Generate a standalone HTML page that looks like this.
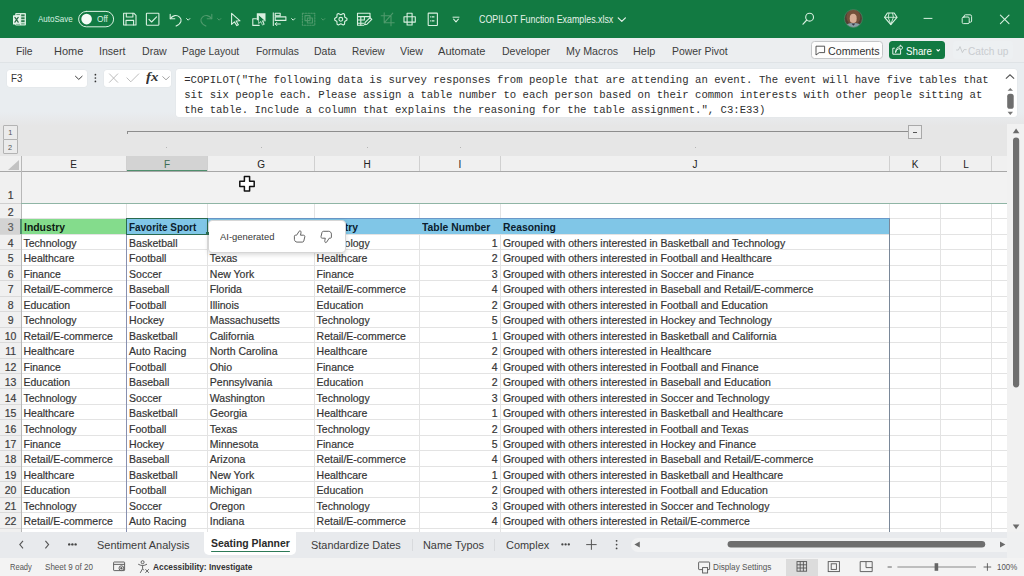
<!DOCTYPE html>
<html><head><meta charset="utf-8"><style>
html,body{margin:0;padding:0;}
body{width:1024px;height:576px;overflow:hidden;position:relative;background:#fff;font-family:"Liberation Sans",sans-serif;}
</style></head><body>
<div style="position:absolute;left:0.00px;top:0.00px;width:1024.00px;height:37.60px;background:#127a42"></div><div style="position:absolute;left:0.00px;top:37.60px;width:1024.00px;height:24.40px;background:#eceef0"></div><div style="position:absolute;left:0.00px;top:62.00px;width:1024.00px;height:62.00px;background:#e9edf0"></div><div style="position:absolute;left:0.00px;top:61.60px;width:1024.00px;height:0.80px;background:#dfe3e6"></div><div style="position:absolute;left:0.00px;top:124.00px;width:1024.00px;height:32.00px;background:#e6e6e6"></div><div style="position:absolute;left:0.00px;top:112.00px;width:1024.00px;height:14.00px;background:linear-gradient(#e9edf0,#e7e8e9 70%,#e6e6e6)"></div><div style="position:absolute;left:0.00px;top:156.00px;width:1007.20px;height:15.50px;background:#f0f0f0"></div><div style="position:absolute;left:21.20px;top:171.50px;width:986.00px;height:31.80px;background:#f2f2f2"></div><div style="position:absolute;left:0.00px;top:171.50px;width:21.20px;height:360.30px;background:#f0f0f0"></div><div style="position:absolute;left:21.20px;top:203.30px;width:986.00px;height:328.50px;background:#ffffff"></div><div style="position:absolute;left:1007.20px;top:124.00px;width:16.80px;height:407.80px;background:#f1f1f1"></div><div style="position:absolute;left:0.00px;top:531.80px;width:1024.00px;height:26.50px;background:#e8eaed"></div><div style="position:absolute;left:0.00px;top:558.30px;width:1024.00px;height:17.70px;background:#f3f3f3"></div><div style="position:absolute;left:126.20px;top:156.00px;width:81.50px;height:15.50px;background:#d3d3d3"></div><div style="position:absolute;left:126.20px;top:169.90px;width:81.50px;height:1.60px;background:#4f8f6d"></div><div style="position:absolute;left:0.00px;top:218.77px;width:21.20px;height:15.47px;background:#d3d3d3"></div><div style="position:absolute;left:21.20px;top:218.77px;width:105.00px;height:15.47px;background:#84dc8c"></div><div style="position:absolute;left:126.20px;top:218.77px;width:763.40px;height:15.47px;background:#80c6e7"></div><div style="position:absolute;left:125.70px;top:203.30px;width:1.00px;height:15.47px;background:#e3e3e3"></div><div style="position:absolute;left:125.70px;top:234.24px;width:1.00px;height:297.56px;background:#e3e3e3"></div><div style="position:absolute;left:125.70px;top:156.00px;width:1.00px;height:15.50px;background:#d0d0d0"></div><div style="position:absolute;left:207.20px;top:203.30px;width:1.00px;height:15.47px;background:#e3e3e3"></div><div style="position:absolute;left:207.20px;top:234.24px;width:1.00px;height:297.56px;background:#e3e3e3"></div><div style="position:absolute;left:207.20px;top:156.00px;width:1.00px;height:15.50px;background:#d0d0d0"></div><div style="position:absolute;left:313.90px;top:203.30px;width:1.00px;height:15.47px;background:#e3e3e3"></div><div style="position:absolute;left:313.90px;top:234.24px;width:1.00px;height:297.56px;background:#e3e3e3"></div><div style="position:absolute;left:313.90px;top:156.00px;width:1.00px;height:15.50px;background:#d0d0d0"></div><div style="position:absolute;left:419.10px;top:203.30px;width:1.00px;height:15.47px;background:#e3e3e3"></div><div style="position:absolute;left:419.10px;top:234.24px;width:1.00px;height:297.56px;background:#e3e3e3"></div><div style="position:absolute;left:419.10px;top:156.00px;width:1.00px;height:15.50px;background:#d0d0d0"></div><div style="position:absolute;left:499.90px;top:203.30px;width:1.00px;height:15.47px;background:#e3e3e3"></div><div style="position:absolute;left:499.90px;top:234.24px;width:1.00px;height:297.56px;background:#e3e3e3"></div><div style="position:absolute;left:499.90px;top:156.00px;width:1.00px;height:15.50px;background:#d0d0d0"></div><div style="position:absolute;left:889.10px;top:203.30px;width:1.00px;height:15.47px;background:#e3e3e3"></div><div style="position:absolute;left:889.10px;top:234.24px;width:1.00px;height:297.56px;background:#e3e3e3"></div><div style="position:absolute;left:889.10px;top:156.00px;width:1.00px;height:15.50px;background:#d0d0d0"></div><div style="position:absolute;left:939.90px;top:203.30px;width:1.00px;height:328.50px;background:#e3e3e3"></div><div style="position:absolute;left:939.90px;top:156.00px;width:1.00px;height:15.50px;background:#d0d0d0"></div><div style="position:absolute;left:991.10px;top:203.30px;width:1.00px;height:328.50px;background:#e3e3e3"></div><div style="position:absolute;left:991.10px;top:156.00px;width:1.00px;height:15.50px;background:#d0d0d0"></div><div style="position:absolute;left:1039.50px;top:203.30px;width:1.00px;height:328.50px;background:#e3e3e3"></div><div style="position:absolute;left:1039.50px;top:156.00px;width:1.00px;height:15.50px;background:#d0d0d0"></div><div style="position:absolute;left:21.20px;top:218.27px;width:986.00px;height:1.00px;background:#e3e3e3"></div><div style="position:absolute;left:0.00px;top:218.27px;width:21.20px;height:1.00px;background:#dadada"></div><div style="position:absolute;left:21.20px;top:233.74px;width:986.00px;height:1.00px;background:#e3e3e3"></div><div style="position:absolute;left:0.00px;top:233.74px;width:21.20px;height:1.00px;background:#dadada"></div><div style="position:absolute;left:21.20px;top:249.21px;width:986.00px;height:1.00px;background:#e3e3e3"></div><div style="position:absolute;left:0.00px;top:249.21px;width:21.20px;height:1.00px;background:#dadada"></div><div style="position:absolute;left:21.20px;top:264.68px;width:986.00px;height:1.00px;background:#e3e3e3"></div><div style="position:absolute;left:0.00px;top:264.68px;width:21.20px;height:1.00px;background:#dadada"></div><div style="position:absolute;left:21.20px;top:280.15px;width:986.00px;height:1.00px;background:#e3e3e3"></div><div style="position:absolute;left:0.00px;top:280.15px;width:21.20px;height:1.00px;background:#dadada"></div><div style="position:absolute;left:21.20px;top:295.62px;width:986.00px;height:1.00px;background:#e3e3e3"></div><div style="position:absolute;left:0.00px;top:295.62px;width:21.20px;height:1.00px;background:#dadada"></div><div style="position:absolute;left:21.20px;top:311.09px;width:986.00px;height:1.00px;background:#e3e3e3"></div><div style="position:absolute;left:0.00px;top:311.09px;width:21.20px;height:1.00px;background:#dadada"></div><div style="position:absolute;left:21.20px;top:326.56px;width:986.00px;height:1.00px;background:#e3e3e3"></div><div style="position:absolute;left:0.00px;top:326.56px;width:21.20px;height:1.00px;background:#dadada"></div><div style="position:absolute;left:21.20px;top:342.03px;width:986.00px;height:1.00px;background:#e3e3e3"></div><div style="position:absolute;left:0.00px;top:342.03px;width:21.20px;height:1.00px;background:#dadada"></div><div style="position:absolute;left:21.20px;top:357.50px;width:986.00px;height:1.00px;background:#e3e3e3"></div><div style="position:absolute;left:0.00px;top:357.50px;width:21.20px;height:1.00px;background:#dadada"></div><div style="position:absolute;left:21.20px;top:372.97px;width:986.00px;height:1.00px;background:#e3e3e3"></div><div style="position:absolute;left:0.00px;top:372.97px;width:21.20px;height:1.00px;background:#dadada"></div><div style="position:absolute;left:21.20px;top:388.44px;width:986.00px;height:1.00px;background:#e3e3e3"></div><div style="position:absolute;left:0.00px;top:388.44px;width:21.20px;height:1.00px;background:#dadada"></div><div style="position:absolute;left:21.20px;top:403.91px;width:986.00px;height:1.00px;background:#e3e3e3"></div><div style="position:absolute;left:0.00px;top:403.91px;width:21.20px;height:1.00px;background:#dadada"></div><div style="position:absolute;left:21.20px;top:419.38px;width:986.00px;height:1.00px;background:#e3e3e3"></div><div style="position:absolute;left:0.00px;top:419.38px;width:21.20px;height:1.00px;background:#dadada"></div><div style="position:absolute;left:21.20px;top:434.85px;width:986.00px;height:1.00px;background:#e3e3e3"></div><div style="position:absolute;left:0.00px;top:434.85px;width:21.20px;height:1.00px;background:#dadada"></div><div style="position:absolute;left:21.20px;top:450.32px;width:986.00px;height:1.00px;background:#e3e3e3"></div><div style="position:absolute;left:0.00px;top:450.32px;width:21.20px;height:1.00px;background:#dadada"></div><div style="position:absolute;left:21.20px;top:465.79px;width:986.00px;height:1.00px;background:#e3e3e3"></div><div style="position:absolute;left:0.00px;top:465.79px;width:21.20px;height:1.00px;background:#dadada"></div><div style="position:absolute;left:21.20px;top:481.26px;width:986.00px;height:1.00px;background:#e3e3e3"></div><div style="position:absolute;left:0.00px;top:481.26px;width:21.20px;height:1.00px;background:#dadada"></div><div style="position:absolute;left:21.20px;top:496.73px;width:986.00px;height:1.00px;background:#e3e3e3"></div><div style="position:absolute;left:0.00px;top:496.73px;width:21.20px;height:1.00px;background:#dadada"></div><div style="position:absolute;left:21.20px;top:512.20px;width:986.00px;height:1.00px;background:#e3e3e3"></div><div style="position:absolute;left:0.00px;top:512.20px;width:21.20px;height:1.00px;background:#dadada"></div><div style="position:absolute;left:21.20px;top:527.67px;width:986.00px;height:1.00px;background:#e3e3e3"></div><div style="position:absolute;left:0.00px;top:527.67px;width:21.20px;height:1.00px;background:#dadada"></div><div style="position:absolute;left:0.00px;top:170.90px;width:1007.20px;height:1.20px;background:#a8a8a8"></div><div style="position:absolute;left:20.60px;top:156.00px;width:1.20px;height:375.80px;background:#b8b8b8"></div><div style="position:absolute;left:21.20px;top:202.70px;width:986.00px;height:1.20px;background:#8fb5a5"></div><div style="position:absolute;left:0.00px;top:202.80px;width:21.20px;height:1.00px;background:#cfcfcf"></div><div style="position:absolute;left:20.00px;top:218.77px;width:1.60px;height:15.47px;background:#4f8f6d"></div><svg style="position:absolute;left:0;top:156px" width="21" height="16"><path d="M8 14 L19 14 L19 4 Z" fill="#c2c2c2"/></svg><div style="position:absolute;left:125.60px;top:218.17px;width:764.60px;height:1.20px;background:#6a98c8"></div><div style="position:absolute;left:125.70px;top:218.77px;width:1.00px;height:313.03px;background:#8890b0"></div><div style="position:absolute;left:889.10px;top:218.77px;width:1.00px;height:313.03px;background:#7a8899"></div><div style="position:absolute;left:125.70px;top:218.17px;width:82.60px;height:16.47px;border:1.1px solid #2a6a50;box-sizing:border-box"></div><svg style="position:absolute;left:0;top:0" width="1024" height="37" viewBox="0 0 1024 37" fill="none" stroke="#d9f0e0" stroke-width="1.1" stroke-linejoin="round" stroke-linecap="round">
<!-- excel icon -->
<rect x="15.2" y="13.1" width="10.8" height="12.5" rx="1" fill="#d3ecdb" stroke="none"/>
<g fill="#2f7a4f" stroke="none">
<rect x="21.2" y="14.4" width="3.4" height="1.9"/><rect x="21.2" y="17.3" width="3.4" height="1.9"/><rect x="21.2" y="20.2" width="3.4" height="1.9"/><rect x="21.2" y="23" width="3.4" height="1.6" fill="#7fb596"/>
<rect x="16.4" y="14.2" width="3.6" height="1" fill="#4f8f68"/>
</g>
<rect x="13" y="15.2" width="7.2" height="9.4" rx="0.6" fill="#e6f5eb" stroke="none"/>
<path d="M14.9 17.4l3.3 4.8M18.2 17.4l-3.3 4.8" stroke="#2a6a45" stroke-width="1.2"/>
<rect x="16" y="23.8" width="4" height="1.2" fill="#8fbfa2" stroke="none"/>
<!-- toggle -->
<rect x="78.6" y="11.4" width="35" height="15.4" rx="7.7" stroke-width="1"/>
<circle cx="86.6" cy="19.1" r="5.3" fill="#f4fbf6" stroke="none"/>
<!-- save -->
<path d="M123.6 13.2h10.2l2.2 2.2v9.6h-12.4z"/>
<path d="M126.3 13.2v3.8h6.6v-3.8M126 25v-4.6h7.6v4.6"/>
<!-- checkbox -->
<rect x="146.4" y="13.2" width="12.5" height="12" rx="0.6"/>
<path d="M149 19.4l2.6 2.6l5-5.2"/>
<!-- undo -->
<path d="M170.2 14.2v4.6h4.6"/>
<path d="M170.4 18.6c2.2-3.4 6.5-4 9.2-1.5c2.6 2.4 2.2 6.2-3.5 9"/>
<path d="M186.6 18.6l1.6 1.6l1.6-1.6" stroke-width="1"/>
<!-- redo dim -->
<g stroke="#4f9a6c">
<path d="M211.8 14.2v4.6h-4.6"/>
<path d="M211.6 18.6c-2.2-3.4-6.5-4-9.2-1.5c-2.6 2.4-2.2 6.2 3.5 9"/>
<path d="M217.6 18.6l1.6 1.6l1.6-1.6" stroke-width="1"/>
</g>
<!-- pointer -->
<path d="M231.6 13.4v11l2.8-2.6l2.4 3.8l1.6-0.9l-2.3-3.7l3.9-0.2z"/>
<!-- shape select -->
<path d="M256.4 18.8h-3.6v6.6h6.4"/>
<path d="M256.8 13.2h8.7v7.4h-2.4l1.6 3.6l-1.4.7l-1.7-3.6l-2.2 2.1v-3.2h-2.6z" fill="#d9f0e0" stroke="none"/>
<path d="M258.6 15v8.6l2.2-2.1l1.7 3.6l1.4-.7l-1.6-3.6h2.8z" fill="#127a42" stroke="#d9f0e0" stroke-width="0.7"/>
<!-- align -->
<path d="M273.3 12.9v12.6"/>
<rect x="275.2" y="13.3" width="5" height="2.6"/>
<rect x="275.2" y="16.9" width="10.7" height="3.5"/>
<path d="M280.4 24h-5.2M276.8 22.4l-1.6 1.6l1.6 1.6" stroke-width="1"/>
<path d="M291.6 18.6l1.6 1.6l1.6-1.6" stroke-width="1"/>
<!-- group dim -->
<g stroke="#4f9a6c" stroke-dasharray="1.5 1.3">
<rect x="302.4" y="13.2" width="12.4" height="12"/>
</g>
<g stroke="#4f9a6c">
<rect x="305" y="15.6" width="5" height="5"/>
<rect x="307.4" y="18" width="5" height="5"/>
<path d="M321.6 18.6l1.6 1.6l1.6-1.6" stroke-width="1"/>
</g>
<!-- gear -->
<path d="M346.95 18.54 L346.95 20.06 L344.70 21.55 L344.53 24.25 L343.22 25.01 L340.80 23.80 L338.38 25.01 L337.07 24.25 L336.90 21.55 L334.65 20.06 L334.65 18.54 L336.90 17.05 L337.07 14.35 L338.38 13.59 L340.80 14.80 L343.22 13.59 L344.53 14.35 L344.70 17.05Z" stroke-linejoin="round"/>
<circle cx="340.8" cy="19.3" r="1.9"/>
<!-- table edit -->
<path d="M363.5 25.2h-6v-12h12.5v5.4"/>
<path d="M357.5 16.6h12.5M357.5 20h6.2M357.5 23.2h6M360.8 16.6v8.6M364.4 16.6v3.4"/>
<path d="M364.6 24.8l.6-2.4l4.8-4.8l1.8 1.8l-4.8 4.8z"/>
<!-- crop dim -->
<g stroke="#4f9a6c">
<path d="M384.2 12.8v10h10M381.2 15.8h9.8v10M392.8 13.2l-8.6 9.6"/>
</g>
<!-- move cross -->
<rect x="407.1" y="13.3" width="5" height="11.7"/>
<rect x="404" y="16.8" width="11.3" height="5.3"/>
<!-- form -->
<rect x="428.2" y="13.1" width="9.2" height="12.4" rx="0.5"/>
<path d="M430.2 16.8h1.2M432 16.8h2.4M430.2 20.8h1.2M432 20.8h2.4" stroke-width="1.3" stroke-linecap="butt"/>
<!-- customize -->
<path d="M453 17.2h6" stroke-width="1"/>
<path d="M453.6 19.2l2.4 2.6l2.4-2.6" stroke-width="1.1"/>
<!-- title chevron -->
<path d="M618.2 17.8l3.6 3.6l3.6-3.6" stroke="#e6f2ea" stroke-width="1.2"/>
<!-- search -->
<circle cx="809.6" cy="17.2" r="3.9"/>
<path d="M806.8 20l-3.8 4.2" stroke-width="1.2"/>
<!-- diamond -->
<path d="M887.4 13h6.8l2.8 4.3l-6.2 7.3l-6.2-7.3z"/>
<path d="M884.8 17.3h12M889 13.2l-.8 4.1l2.6 7M892.6 13.2l.8 4.1l-2.6 7" stroke-width="0.9"/>
<!-- minimize -->
<path d="M924 18.4h8" stroke-width="1"/>
<!-- restore -->
<rect x="962.2" y="17" width="7" height="6.6" rx="1.2" stroke-width="1"/>
<path d="M964.2 17v-1a1.2 1.2 0 0 1 1.2-1.2h4.6a1.6 1.6 0 0 1 1.6 1.6v4.6a1.2 1.2 0 0 1 -1.2 1.2h-1" stroke-width="1"/>
<!-- close -->
<path d="M1000.4 15.2l8.6 8.4M1009 15.2l-8.6 8.4" stroke-width="1.1"/>
</svg><svg style="position:absolute;left:843px;top:8px" width="21" height="21" viewBox="0 0 21 21">
<defs><clipPath id="av"><circle cx="10.4" cy="10.5" r="9"/></clipPath></defs>
<g clip-path="url(#av)">
<rect width="21" height="21" fill="#4f4036"/>
<ellipse cx="10.4" cy="9" rx="7" ry="7.4" fill="#73503a"/>
<path d="M1.5 21c.5-4.5 3.8-6 8.9-6s8.4 1.5 8.9 6z" fill="#8a9ea6"/>
<path d="M8.4 15.4l2 2.4l2-2.4z" fill="#3a3340"/>
<ellipse cx="10.2" cy="10.4" rx="3.5" ry="4.6" fill="#d8ae96"/>
</g>
<circle cx="10.4" cy="10.5" r="9" fill="none" stroke="#4a8a64" stroke-width="0.7"/>
</svg><div style="position:absolute;left:810.80px;top:40.80px;width:71.80px;height:18.60px;background:#fdfdfd;border:0.8px solid #c4c6c8;border-radius:3.5px;box-sizing:border-box"></div><svg style="position:absolute;left:814px;top:44px" width="14" height="13" fill="none" stroke="#444" stroke-width="0.9" stroke-linejoin="round"><path d="M2 2.2h8.6v6.4h-5.4l-3.2 2.4v-2.4z"/></svg><div style="position:absolute;left:888.80px;top:40.80px;width:56.20px;height:18.60px;background:#127a42;border-radius:3.5px"></div><svg style="position:absolute;left:890px;top:43px" width="56" height="14" fill="none" stroke="#fff" stroke-width="0.9" stroke-linejoin="round"><path d="M10.6 7.4v3.8h-7.8v-6h2"/><path d="M5.6 9.6c.4-2.6 2-4 4.6-4v1.8l2.8-2.8l-2.8-2.6v1.8c-3 0-4.6 2.4-4.6 5.8z"/><path d="M46.6 6.4l1.6 1.6l1.6-1.6" stroke-width="1.1"/></svg><div style="position:absolute;left:953.40px;top:40.80px;width:59.40px;height:18.60px;background:#edf0f2;border-radius:3.5px"></div><svg style="position:absolute;left:955px;top:43px" width="14" height="14" fill="none" stroke="#c5c8cb" stroke-width="0.9"><path d="M1.2 7h2.2l1.6-3.4l2.4 6l1.6-3h2.6"/></svg><div style="position:absolute;left:7.20px;top:69.80px;width:79.80px;height:17.00px;background:#fff;border-radius:3px;box-shadow:0 0 0 0.5px #e2e5e8"></div><div style="position:absolute;left:103.60px;top:69.80px;width:67.80px;height:17.00px;background:#fff;border-radius:3px;box-shadow:0 0 0 0.5px #e2e5e8"></div><div style="position:absolute;left:176.00px;top:69.40px;width:840.80px;height:47.80px;background:#fff;border-radius:3px;box-shadow:0 0 0 0.5px #e2e5e8"></div><svg style="position:absolute;left:0;top:62px" width="200" height="30" fill="none" stroke="#444" stroke-width="1">
<path d="M75.2 14l3.6 3.4l3.6-3.4" stroke-width="1" stroke="#3a3a3a"/>
<circle cx="95.4" cy="12.7" r="0.85" fill="#333" stroke="none"/><circle cx="95.4" cy="16" r="0.85" fill="#333" stroke="none"/><circle cx="95.4" cy="19.4" r="0.85" fill="#333" stroke="none"/>
<path d="M109.2 11.6l8.8 9M118 11.6l-8.8 9" stroke="#b4b4b4" stroke-width="0.9"/>
<path d="M126.6 15.6l4.2 4.2l8.2-8.2" stroke="#b4b4b4" stroke-width="0.9"/>
<path d="M162.4 14.4l3.6 3.4l3.6-3.4" stroke="#9a9a9a" stroke-width="0.9"/>
</svg><svg style="position:absolute;left:1000px;top:70px" width="20" height="46" fill="none" stroke="#555" stroke-width="1">
<path d="M5.9 8.6l4.1-3.8l4.1 3.8" stroke-width="1.2"/>
<path d="M7.6 20.8l2.7-2.9l2.7 2.9z" fill="#777" stroke="none"/>
<rect x="7.2" y="23.7" width="6.5" height="15.1" rx="2.6" fill="#6e6e6e" stroke="none"/>
<path d="M7.6 41.8l2.7 3.2l2.7-3.2z" fill="#777" stroke="none"/>
</svg><div style="position:absolute;left:2.50px;top:124.70px;width:15.00px;height:15.00px;background:#ebebeb;border:0.9px solid #b3b3b3;border-radius:1px;box-sizing:border-box"></div><div style="position:absolute;left:2.50px;top:139.00px;width:15.00px;height:15.20px;background:#ebebeb;border:0.9px solid #b3b3b3;border-radius:1px;box-sizing:border-box"></div><div style="position:absolute;left:127.30px;top:130.60px;width:780.40px;height:1.20px;background:#8d8d8d"></div><div style="position:absolute;left:127.30px;top:130.60px;width:1.20px;height:3.40px;background:#8d8d8d"></div><div style="position:absolute;left:907.60px;top:124.60px;width:14.20px;height:14.80px;background:#ececec;border:0.8px solid #a9a9a9;box-sizing:border-box"></div><div style="position:absolute;left:912.60px;top:131.60px;width:4.40px;height:0.90px;background:#555"></div><div style="position:absolute;left:166.10px;top:146.60px;width:1.00px;height:1.00px;background:#b5b5b5"></div><div style="position:absolute;left:260.50px;top:146.60px;width:1.00px;height:1.00px;background:#b5b5b5"></div><div style="position:absolute;left:366.50px;top:146.60px;width:1.00px;height:1.00px;background:#b5b5b5"></div><div style="position:absolute;left:459.50px;top:146.60px;width:1.00px;height:1.00px;background:#b5b5b5"></div><div style="position:absolute;left:694.50px;top:146.60px;width:1.00px;height:1.00px;background:#b5b5b5"></div><svg style="position:absolute;left:1007px;top:124px" width="17" height="408">
<path d="M5.8 9.2l3.3-4.6l3.3 4.6z" fill="#6a6a6a"/>
<rect x="6" y="13.6" width="6.2" height="249.8" rx="3.1" fill="#6e6e6e"/>
<path d="M5.8 400.4l3.3 4.8l3.3-4.8z" fill="#6a6a6a"/>
</svg><div style="position:absolute;left:203.80px;top:531.80px;width:92.60px;height:23.40px;background:#ffffff;border-radius:0 0 5px 5px"></div><div style="position:absolute;left:211.20px;top:550.60px;width:79.00px;height:1.80px;background:#2d7a57;border-radius:1px"></div><div style="position:absolute;left:411.60px;top:538.80px;width:0.80px;height:12.00px;background:#d8dadd"></div><div style="position:absolute;left:494.20px;top:538.80px;width:0.80px;height:12.00px;background:#d8dadd"></div><div style="position:absolute;left:631.40px;top:537.70px;width:392.60px;height:14.60px;background:#f1f2f3;border-radius:7px 0 0 7px"></div><div style="position:absolute;left:1007.20px;top:531.80px;width:16.80px;height:26.50px;background:#eff0f1"></div><svg style="position:absolute;left:0;top:532px" width="1024" height="26" fill="none" stroke="#555" stroke-width="1.1">
<path d="M23 8.8l-3.2 3.8l3.2 3.8M45.4 8.8l3.2 3.8l-3.2 3.8"/>
<g fill="#444" stroke="none">
<circle cx="69.2" cy="12.4" r="1.2"/><circle cx="72.4" cy="12.4" r="1.2"/><circle cx="75.6" cy="12.4" r="1.2"/>
<circle cx="562.4" cy="12.4" r="1.15"/><circle cx="565.6" cy="12.4" r="1.15"/><circle cx="568.8" cy="12.4" r="1.15"/>
<circle cx="616.6" cy="8.8" r="0.9"/><circle cx="616.6" cy="12.6" r="0.9"/><circle cx="616.6" cy="16.4" r="0.9"/>
</g>
<path d="M591.4 7.4v10.4M586.2 12.6h10.4" stroke-width="1"/>
<path d="M639.8 9.6l-5.4 3l5.4 3z" fill="#6a6a6a" stroke="none"/>
<path d="M1000 9.6l5.4 3l-5.4 3z" fill="#6a6a6a" stroke="none"/>
<rect x="727.6" y="9" width="257.6" height="6.6" rx="3.3" fill="#6e6e6e" stroke="none"/>
</svg><div style="position:absolute;left:786.20px;top:558.80px;width:32.00px;height:17.20px;background:#dcdcdc"></div><svg style="position:absolute;left:0;top:558px" width="1024" height="18" fill="none" stroke="#555" stroke-width="0.9">
<rect x="113.6" y="4" width="11" height="8.6" rx="0.6"/><path d="M113.6 6.4h11"/><circle cx="121.4" cy="10.2" r="2.4" fill="#f3f3f3"/><circle cx="121.4" cy="10.2" r="0.8" fill="#555"/>
<circle cx="142.6" cy="4.2" r="1.5"/><path d="M138.2 6.2c1.6.9 3 1.3 4.4 1.3s2.8-.4 4.4-1.3M142.6 7.5v3.2l-2.4 4.2M142.6 10.7l1.2 1.6"/><path d="M145.4 11.2l3.4 3.6M148.8 11.2l-3.4 3.6" stroke-width="0.9"/>
<rect x="698.6" y="4" width="11" height="7.6" rx="0.6"/><rect x="702.6" y="9.6" width="5" height="5.4" fill="#f3f3f3"/>
<rect x="797" y="3.6" width="9.6" height="9.6"/><path d="M800.2 3.6v9.6M803.4 3.6v9.6M797 6.8h9.6M797 10h9.6"/>
<rect x="828.2" y="3.6" width="11.2" height="10"/><rect x="831.2" y="5.8" width="5.2" height="5.6"/>
<path d="M860.2 3.6h12v10h-12zM866 3.6v6h6.2"/>
<path d="M887.6 9h4.2M983.6 9h7.6M987.4 5.2v7.6"/>
<path d="M897.4 9h78.6" stroke="#8a8a8a" stroke-width="1.1"/>
<rect x="934.6" y="5.2" width="3.6" height="7.6" fill="#666" stroke="none"/>
</svg><div style="position:absolute;left:23.50px;top:191.50px;font:400 10.5px/11.729px 'Liberation Sans', sans-serif;color:#333333;white-space:pre;-webkit-text-stroke:0.18px currentColor;"></div><div style="position:absolute;left:23.50px;top:222.44px;font:700 10.5px/11.729px 'Liberation Sans', sans-serif;color:#0d1a12;white-space:pre;transform:scaleX(0.9898);transform-origin:0 0;">Industry</div><div style="position:absolute;left:129.10px;top:222.44px;font:700 10.5px/11.729px 'Liberation Sans', sans-serif;color:#0b1d2e;white-space:pre;transform:scaleX(0.9440);transform-origin:0 0;">Favorite Sport</div><div style="position:absolute;left:209.80px;top:222.44px;font:700 10.5px/11.729px 'Liberation Sans', sans-serif;color:#0b1d2e;white-space:pre;transform:scaleX(1.0900);transform-origin:0 0;">State</div><div style="position:absolute;left:316.60px;top:222.44px;font:700 10.5px/11.729px 'Liberation Sans', sans-serif;color:#0b1d2e;white-space:pre;transform:scaleX(0.9898);transform-origin:0 0;">Industry</div><div style="position:absolute;left:422.40px;top:222.44px;font:700 10.5px/11.729px 'Liberation Sans', sans-serif;color:#0b1d2e;white-space:pre;transform:scaleX(0.9865);transform-origin:0 0;">Table Number</div><div style="position:absolute;left:502.90px;top:222.44px;font:700 10.5px/11.729px 'Liberation Sans', sans-serif;color:#0b1d2e;white-space:pre;transform:scaleX(0.9835);transform-origin:0 0;">Reasoning</div><div style="position:absolute;left:23.50px;top:237.91px;font:400 10.5px/11.729px 'Liberation Sans', sans-serif;color:#333333;white-space:pre;-webkit-text-stroke:0.18px currentColor;">Technology</div><div style="position:absolute;left:129.10px;top:237.91px;font:400 10.5px/11.729px 'Liberation Sans', sans-serif;color:#333333;white-space:pre;-webkit-text-stroke:0.18px currentColor;">Basketball</div><div style="position:absolute;left:209.80px;top:237.91px;font:400 10.5px/11.729px 'Liberation Sans', sans-serif;color:#333333;white-space:pre;-webkit-text-stroke:0.18px currentColor;">Arizona</div><div style="position:absolute;left:316.60px;top:237.91px;font:400 10.5px/11.729px 'Liberation Sans', sans-serif;color:#333333;white-space:pre;-webkit-text-stroke:0.18px currentColor;">Technology</div><div style="position:absolute;left:491.76px;top:237.91px;font:400 10.5px/11.729px 'Liberation Sans', sans-serif;color:#333333;white-space:pre;-webkit-text-stroke:0.18px currentColor;">1</div><div style="position:absolute;left:502.90px;top:237.91px;font:400 10.5px/11.729px 'Liberation Sans', sans-serif;color:#333333;white-space:pre;-webkit-text-stroke:0.18px currentColor;">Grouped with others interested in Basketball and Technology</div><div style="position:absolute;left:23.50px;top:253.38px;font:400 10.5px/11.729px 'Liberation Sans', sans-serif;color:#333333;white-space:pre;-webkit-text-stroke:0.18px currentColor;">Healthcare</div><div style="position:absolute;left:129.10px;top:253.38px;font:400 10.5px/11.729px 'Liberation Sans', sans-serif;color:#333333;white-space:pre;-webkit-text-stroke:0.18px currentColor;">Football</div><div style="position:absolute;left:209.80px;top:253.38px;font:400 10.5px/11.729px 'Liberation Sans', sans-serif;color:#333333;white-space:pre;-webkit-text-stroke:0.18px currentColor;">Texas</div><div style="position:absolute;left:316.60px;top:253.38px;font:400 10.5px/11.729px 'Liberation Sans', sans-serif;color:#333333;white-space:pre;-webkit-text-stroke:0.18px currentColor;">Healthcare</div><div style="position:absolute;left:491.76px;top:253.38px;font:400 10.5px/11.729px 'Liberation Sans', sans-serif;color:#333333;white-space:pre;-webkit-text-stroke:0.18px currentColor;">2</div><div style="position:absolute;left:502.90px;top:253.38px;font:400 10.5px/11.729px 'Liberation Sans', sans-serif;color:#333333;white-space:pre;-webkit-text-stroke:0.18px currentColor;">Grouped with others interested in Football and Healthcare</div><div style="position:absolute;left:23.50px;top:268.85px;font:400 10.5px/11.729px 'Liberation Sans', sans-serif;color:#333333;white-space:pre;-webkit-text-stroke:0.18px currentColor;">Finance</div><div style="position:absolute;left:129.10px;top:268.85px;font:400 10.5px/11.729px 'Liberation Sans', sans-serif;color:#333333;white-space:pre;-webkit-text-stroke:0.18px currentColor;">Soccer</div><div style="position:absolute;left:209.80px;top:268.85px;font:400 10.5px/11.729px 'Liberation Sans', sans-serif;color:#333333;white-space:pre;-webkit-text-stroke:0.18px currentColor;">New York</div><div style="position:absolute;left:316.60px;top:268.85px;font:400 10.5px/11.729px 'Liberation Sans', sans-serif;color:#333333;white-space:pre;-webkit-text-stroke:0.18px currentColor;">Finance</div><div style="position:absolute;left:491.76px;top:268.85px;font:400 10.5px/11.729px 'Liberation Sans', sans-serif;color:#333333;white-space:pre;-webkit-text-stroke:0.18px currentColor;">3</div><div style="position:absolute;left:502.90px;top:268.85px;font:400 10.5px/11.729px 'Liberation Sans', sans-serif;color:#333333;white-space:pre;-webkit-text-stroke:0.18px currentColor;">Grouped with others interested in Soccer and Finance</div><div style="position:absolute;left:23.50px;top:284.32px;font:400 10.5px/11.729px 'Liberation Sans', sans-serif;color:#333333;white-space:pre;-webkit-text-stroke:0.18px currentColor;">Retail/E-commerce</div><div style="position:absolute;left:129.10px;top:284.32px;font:400 10.5px/11.729px 'Liberation Sans', sans-serif;color:#333333;white-space:pre;-webkit-text-stroke:0.18px currentColor;">Baseball</div><div style="position:absolute;left:209.80px;top:284.32px;font:400 10.5px/11.729px 'Liberation Sans', sans-serif;color:#333333;white-space:pre;-webkit-text-stroke:0.18px currentColor;">Florida</div><div style="position:absolute;left:316.60px;top:284.32px;font:400 10.5px/11.729px 'Liberation Sans', sans-serif;color:#333333;white-space:pre;-webkit-text-stroke:0.18px currentColor;">Retail/E-commerce</div><div style="position:absolute;left:491.76px;top:284.32px;font:400 10.5px/11.729px 'Liberation Sans', sans-serif;color:#333333;white-space:pre;-webkit-text-stroke:0.18px currentColor;">4</div><div style="position:absolute;left:502.90px;top:284.32px;font:400 10.5px/11.729px 'Liberation Sans', sans-serif;color:#333333;white-space:pre;-webkit-text-stroke:0.18px currentColor;">Grouped with others interested in Baseball and Retail/E-commerce</div><div style="position:absolute;left:23.50px;top:299.79px;font:400 10.5px/11.729px 'Liberation Sans', sans-serif;color:#333333;white-space:pre;-webkit-text-stroke:0.18px currentColor;">Education</div><div style="position:absolute;left:129.10px;top:299.79px;font:400 10.5px/11.729px 'Liberation Sans', sans-serif;color:#333333;white-space:pre;-webkit-text-stroke:0.18px currentColor;">Football</div><div style="position:absolute;left:209.80px;top:299.79px;font:400 10.5px/11.729px 'Liberation Sans', sans-serif;color:#333333;white-space:pre;-webkit-text-stroke:0.18px currentColor;">Illinois</div><div style="position:absolute;left:316.60px;top:299.79px;font:400 10.5px/11.729px 'Liberation Sans', sans-serif;color:#333333;white-space:pre;-webkit-text-stroke:0.18px currentColor;">Education</div><div style="position:absolute;left:491.76px;top:299.79px;font:400 10.5px/11.729px 'Liberation Sans', sans-serif;color:#333333;white-space:pre;-webkit-text-stroke:0.18px currentColor;">2</div><div style="position:absolute;left:502.90px;top:299.79px;font:400 10.5px/11.729px 'Liberation Sans', sans-serif;color:#333333;white-space:pre;-webkit-text-stroke:0.18px currentColor;">Grouped with others interested in Football and Education</div><div style="position:absolute;left:23.50px;top:315.26px;font:400 10.5px/11.729px 'Liberation Sans', sans-serif;color:#333333;white-space:pre;-webkit-text-stroke:0.18px currentColor;">Technology</div><div style="position:absolute;left:129.10px;top:315.26px;font:400 10.5px/11.729px 'Liberation Sans', sans-serif;color:#333333;white-space:pre;-webkit-text-stroke:0.18px currentColor;">Hockey</div><div style="position:absolute;left:209.80px;top:315.26px;font:400 10.5px/11.729px 'Liberation Sans', sans-serif;color:#333333;white-space:pre;-webkit-text-stroke:0.18px currentColor;">Massachusetts</div><div style="position:absolute;left:316.60px;top:315.26px;font:400 10.5px/11.729px 'Liberation Sans', sans-serif;color:#333333;white-space:pre;-webkit-text-stroke:0.18px currentColor;">Technology</div><div style="position:absolute;left:491.76px;top:315.26px;font:400 10.5px/11.729px 'Liberation Sans', sans-serif;color:#333333;white-space:pre;-webkit-text-stroke:0.18px currentColor;">5</div><div style="position:absolute;left:502.90px;top:315.26px;font:400 10.5px/11.729px 'Liberation Sans', sans-serif;color:#333333;white-space:pre;-webkit-text-stroke:0.18px currentColor;">Grouped with others interested in Hockey and Technology</div><div style="position:absolute;left:23.50px;top:330.73px;font:400 10.5px/11.729px 'Liberation Sans', sans-serif;color:#333333;white-space:pre;-webkit-text-stroke:0.18px currentColor;">Retail/E-commerce</div><div style="position:absolute;left:129.10px;top:330.73px;font:400 10.5px/11.729px 'Liberation Sans', sans-serif;color:#333333;white-space:pre;-webkit-text-stroke:0.18px currentColor;">Basketball</div><div style="position:absolute;left:209.80px;top:330.73px;font:400 10.5px/11.729px 'Liberation Sans', sans-serif;color:#333333;white-space:pre;-webkit-text-stroke:0.18px currentColor;">California</div><div style="position:absolute;left:316.60px;top:330.73px;font:400 10.5px/11.729px 'Liberation Sans', sans-serif;color:#333333;white-space:pre;-webkit-text-stroke:0.18px currentColor;">Retail/E-commerce</div><div style="position:absolute;left:491.76px;top:330.73px;font:400 10.5px/11.729px 'Liberation Sans', sans-serif;color:#333333;white-space:pre;-webkit-text-stroke:0.18px currentColor;">1</div><div style="position:absolute;left:502.90px;top:330.73px;font:400 10.5px/11.729px 'Liberation Sans', sans-serif;color:#333333;white-space:pre;-webkit-text-stroke:0.18px currentColor;">Grouped with others interested in Basketball and California</div><div style="position:absolute;left:23.50px;top:346.20px;font:400 10.5px/11.729px 'Liberation Sans', sans-serif;color:#333333;white-space:pre;-webkit-text-stroke:0.18px currentColor;">Healthcare</div><div style="position:absolute;left:129.10px;top:346.20px;font:400 10.5px/11.729px 'Liberation Sans', sans-serif;color:#333333;white-space:pre;-webkit-text-stroke:0.18px currentColor;">Auto Racing</div><div style="position:absolute;left:209.80px;top:346.20px;font:400 10.5px/11.729px 'Liberation Sans', sans-serif;color:#333333;white-space:pre;-webkit-text-stroke:0.18px currentColor;">North Carolina</div><div style="position:absolute;left:316.60px;top:346.20px;font:400 10.5px/11.729px 'Liberation Sans', sans-serif;color:#333333;white-space:pre;-webkit-text-stroke:0.18px currentColor;">Healthcare</div><div style="position:absolute;left:491.76px;top:346.20px;font:400 10.5px/11.729px 'Liberation Sans', sans-serif;color:#333333;white-space:pre;-webkit-text-stroke:0.18px currentColor;">2</div><div style="position:absolute;left:502.90px;top:346.20px;font:400 10.5px/11.729px 'Liberation Sans', sans-serif;color:#333333;white-space:pre;-webkit-text-stroke:0.18px currentColor;">Grouped with others interested in Healthcare</div><div style="position:absolute;left:23.50px;top:361.67px;font:400 10.5px/11.729px 'Liberation Sans', sans-serif;color:#333333;white-space:pre;-webkit-text-stroke:0.18px currentColor;">Finance</div><div style="position:absolute;left:129.10px;top:361.67px;font:400 10.5px/11.729px 'Liberation Sans', sans-serif;color:#333333;white-space:pre;-webkit-text-stroke:0.18px currentColor;">Football</div><div style="position:absolute;left:209.80px;top:361.67px;font:400 10.5px/11.729px 'Liberation Sans', sans-serif;color:#333333;white-space:pre;-webkit-text-stroke:0.18px currentColor;">Ohio</div><div style="position:absolute;left:316.60px;top:361.67px;font:400 10.5px/11.729px 'Liberation Sans', sans-serif;color:#333333;white-space:pre;-webkit-text-stroke:0.18px currentColor;">Finance</div><div style="position:absolute;left:491.76px;top:361.67px;font:400 10.5px/11.729px 'Liberation Sans', sans-serif;color:#333333;white-space:pre;-webkit-text-stroke:0.18px currentColor;">4</div><div style="position:absolute;left:502.90px;top:361.67px;font:400 10.5px/11.729px 'Liberation Sans', sans-serif;color:#333333;white-space:pre;-webkit-text-stroke:0.18px currentColor;">Grouped with others interested in Football and Finance</div><div style="position:absolute;left:23.50px;top:377.14px;font:400 10.5px/11.729px 'Liberation Sans', sans-serif;color:#333333;white-space:pre;-webkit-text-stroke:0.18px currentColor;">Education</div><div style="position:absolute;left:129.10px;top:377.14px;font:400 10.5px/11.729px 'Liberation Sans', sans-serif;color:#333333;white-space:pre;-webkit-text-stroke:0.18px currentColor;">Baseball</div><div style="position:absolute;left:209.80px;top:377.14px;font:400 10.5px/11.729px 'Liberation Sans', sans-serif;color:#333333;white-space:pre;-webkit-text-stroke:0.18px currentColor;">Pennsylvania</div><div style="position:absolute;left:316.60px;top:377.14px;font:400 10.5px/11.729px 'Liberation Sans', sans-serif;color:#333333;white-space:pre;-webkit-text-stroke:0.18px currentColor;">Education</div><div style="position:absolute;left:491.76px;top:377.14px;font:400 10.5px/11.729px 'Liberation Sans', sans-serif;color:#333333;white-space:pre;-webkit-text-stroke:0.18px currentColor;">2</div><div style="position:absolute;left:502.90px;top:377.14px;font:400 10.5px/11.729px 'Liberation Sans', sans-serif;color:#333333;white-space:pre;-webkit-text-stroke:0.18px currentColor;">Grouped with others interested in Baseball and Education</div><div style="position:absolute;left:23.50px;top:392.61px;font:400 10.5px/11.729px 'Liberation Sans', sans-serif;color:#333333;white-space:pre;-webkit-text-stroke:0.18px currentColor;">Technology</div><div style="position:absolute;left:129.10px;top:392.61px;font:400 10.5px/11.729px 'Liberation Sans', sans-serif;color:#333333;white-space:pre;-webkit-text-stroke:0.18px currentColor;">Soccer</div><div style="position:absolute;left:209.80px;top:392.61px;font:400 10.5px/11.729px 'Liberation Sans', sans-serif;color:#333333;white-space:pre;-webkit-text-stroke:0.18px currentColor;">Washington</div><div style="position:absolute;left:316.60px;top:392.61px;font:400 10.5px/11.729px 'Liberation Sans', sans-serif;color:#333333;white-space:pre;-webkit-text-stroke:0.18px currentColor;">Technology</div><div style="position:absolute;left:491.76px;top:392.61px;font:400 10.5px/11.729px 'Liberation Sans', sans-serif;color:#333333;white-space:pre;-webkit-text-stroke:0.18px currentColor;">3</div><div style="position:absolute;left:502.90px;top:392.61px;font:400 10.5px/11.729px 'Liberation Sans', sans-serif;color:#333333;white-space:pre;-webkit-text-stroke:0.18px currentColor;">Grouped with others interested in Soccer and Technology</div><div style="position:absolute;left:23.50px;top:408.08px;font:400 10.5px/11.729px 'Liberation Sans', sans-serif;color:#333333;white-space:pre;-webkit-text-stroke:0.18px currentColor;">Healthcare</div><div style="position:absolute;left:129.10px;top:408.08px;font:400 10.5px/11.729px 'Liberation Sans', sans-serif;color:#333333;white-space:pre;-webkit-text-stroke:0.18px currentColor;">Basketball</div><div style="position:absolute;left:209.80px;top:408.08px;font:400 10.5px/11.729px 'Liberation Sans', sans-serif;color:#333333;white-space:pre;-webkit-text-stroke:0.18px currentColor;">Georgia</div><div style="position:absolute;left:316.60px;top:408.08px;font:400 10.5px/11.729px 'Liberation Sans', sans-serif;color:#333333;white-space:pre;-webkit-text-stroke:0.18px currentColor;">Healthcare</div><div style="position:absolute;left:491.76px;top:408.08px;font:400 10.5px/11.729px 'Liberation Sans', sans-serif;color:#333333;white-space:pre;-webkit-text-stroke:0.18px currentColor;">1</div><div style="position:absolute;left:502.90px;top:408.08px;font:400 10.5px/11.729px 'Liberation Sans', sans-serif;color:#333333;white-space:pre;-webkit-text-stroke:0.18px currentColor;">Grouped with others interested in Basketball and Healthcare</div><div style="position:absolute;left:23.50px;top:423.55px;font:400 10.5px/11.729px 'Liberation Sans', sans-serif;color:#333333;white-space:pre;-webkit-text-stroke:0.18px currentColor;">Technology</div><div style="position:absolute;left:129.10px;top:423.55px;font:400 10.5px/11.729px 'Liberation Sans', sans-serif;color:#333333;white-space:pre;-webkit-text-stroke:0.18px currentColor;">Football</div><div style="position:absolute;left:209.80px;top:423.55px;font:400 10.5px/11.729px 'Liberation Sans', sans-serif;color:#333333;white-space:pre;-webkit-text-stroke:0.18px currentColor;">Texas</div><div style="position:absolute;left:316.60px;top:423.55px;font:400 10.5px/11.729px 'Liberation Sans', sans-serif;color:#333333;white-space:pre;-webkit-text-stroke:0.18px currentColor;">Technology</div><div style="position:absolute;left:491.76px;top:423.55px;font:400 10.5px/11.729px 'Liberation Sans', sans-serif;color:#333333;white-space:pre;-webkit-text-stroke:0.18px currentColor;">2</div><div style="position:absolute;left:502.90px;top:423.55px;font:400 10.5px/11.729px 'Liberation Sans', sans-serif;color:#333333;white-space:pre;-webkit-text-stroke:0.18px currentColor;">Grouped with others interested in Football and Texas</div><div style="position:absolute;left:23.50px;top:439.02px;font:400 10.5px/11.729px 'Liberation Sans', sans-serif;color:#333333;white-space:pre;-webkit-text-stroke:0.18px currentColor;">Finance</div><div style="position:absolute;left:129.10px;top:439.02px;font:400 10.5px/11.729px 'Liberation Sans', sans-serif;color:#333333;white-space:pre;-webkit-text-stroke:0.18px currentColor;">Hockey</div><div style="position:absolute;left:209.80px;top:439.02px;font:400 10.5px/11.729px 'Liberation Sans', sans-serif;color:#333333;white-space:pre;-webkit-text-stroke:0.18px currentColor;">Minnesota</div><div style="position:absolute;left:316.60px;top:439.02px;font:400 10.5px/11.729px 'Liberation Sans', sans-serif;color:#333333;white-space:pre;-webkit-text-stroke:0.18px currentColor;">Finance</div><div style="position:absolute;left:491.76px;top:439.02px;font:400 10.5px/11.729px 'Liberation Sans', sans-serif;color:#333333;white-space:pre;-webkit-text-stroke:0.18px currentColor;">5</div><div style="position:absolute;left:502.90px;top:439.02px;font:400 10.5px/11.729px 'Liberation Sans', sans-serif;color:#333333;white-space:pre;-webkit-text-stroke:0.18px currentColor;">Grouped with others interested in Hockey and Finance</div><div style="position:absolute;left:23.50px;top:454.49px;font:400 10.5px/11.729px 'Liberation Sans', sans-serif;color:#333333;white-space:pre;-webkit-text-stroke:0.18px currentColor;">Retail/E-commerce</div><div style="position:absolute;left:129.10px;top:454.49px;font:400 10.5px/11.729px 'Liberation Sans', sans-serif;color:#333333;white-space:pre;-webkit-text-stroke:0.18px currentColor;">Baseball</div><div style="position:absolute;left:209.80px;top:454.49px;font:400 10.5px/11.729px 'Liberation Sans', sans-serif;color:#333333;white-space:pre;-webkit-text-stroke:0.18px currentColor;">Arizona</div><div style="position:absolute;left:316.60px;top:454.49px;font:400 10.5px/11.729px 'Liberation Sans', sans-serif;color:#333333;white-space:pre;-webkit-text-stroke:0.18px currentColor;">Retail/E-commerce</div><div style="position:absolute;left:491.76px;top:454.49px;font:400 10.5px/11.729px 'Liberation Sans', sans-serif;color:#333333;white-space:pre;-webkit-text-stroke:0.18px currentColor;">4</div><div style="position:absolute;left:502.90px;top:454.49px;font:400 10.5px/11.729px 'Liberation Sans', sans-serif;color:#333333;white-space:pre;-webkit-text-stroke:0.18px currentColor;">Grouped with others interested in Baseball and Retail/E-commerce</div><div style="position:absolute;left:23.50px;top:469.96px;font:400 10.5px/11.729px 'Liberation Sans', sans-serif;color:#333333;white-space:pre;-webkit-text-stroke:0.18px currentColor;">Healthcare</div><div style="position:absolute;left:129.10px;top:469.96px;font:400 10.5px/11.729px 'Liberation Sans', sans-serif;color:#333333;white-space:pre;-webkit-text-stroke:0.18px currentColor;">Basketball</div><div style="position:absolute;left:209.80px;top:469.96px;font:400 10.5px/11.729px 'Liberation Sans', sans-serif;color:#333333;white-space:pre;-webkit-text-stroke:0.18px currentColor;">New York</div><div style="position:absolute;left:316.60px;top:469.96px;font:400 10.5px/11.729px 'Liberation Sans', sans-serif;color:#333333;white-space:pre;-webkit-text-stroke:0.18px currentColor;">Healthcare</div><div style="position:absolute;left:491.76px;top:469.96px;font:400 10.5px/11.729px 'Liberation Sans', sans-serif;color:#333333;white-space:pre;-webkit-text-stroke:0.18px currentColor;">1</div><div style="position:absolute;left:502.90px;top:469.96px;font:400 10.5px/11.729px 'Liberation Sans', sans-serif;color:#333333;white-space:pre;-webkit-text-stroke:0.18px currentColor;">Grouped with others interested in Basketball and Healthcare</div><div style="position:absolute;left:23.50px;top:485.43px;font:400 10.5px/11.729px 'Liberation Sans', sans-serif;color:#333333;white-space:pre;-webkit-text-stroke:0.18px currentColor;">Education</div><div style="position:absolute;left:129.10px;top:485.43px;font:400 10.5px/11.729px 'Liberation Sans', sans-serif;color:#333333;white-space:pre;-webkit-text-stroke:0.18px currentColor;">Football</div><div style="position:absolute;left:209.80px;top:485.43px;font:400 10.5px/11.729px 'Liberation Sans', sans-serif;color:#333333;white-space:pre;-webkit-text-stroke:0.18px currentColor;">Michigan</div><div style="position:absolute;left:316.60px;top:485.43px;font:400 10.5px/11.729px 'Liberation Sans', sans-serif;color:#333333;white-space:pre;-webkit-text-stroke:0.18px currentColor;">Education</div><div style="position:absolute;left:491.76px;top:485.43px;font:400 10.5px/11.729px 'Liberation Sans', sans-serif;color:#333333;white-space:pre;-webkit-text-stroke:0.18px currentColor;">2</div><div style="position:absolute;left:502.90px;top:485.43px;font:400 10.5px/11.729px 'Liberation Sans', sans-serif;color:#333333;white-space:pre;-webkit-text-stroke:0.18px currentColor;">Grouped with others interested in Football and Education</div><div style="position:absolute;left:23.50px;top:500.90px;font:400 10.5px/11.729px 'Liberation Sans', sans-serif;color:#333333;white-space:pre;-webkit-text-stroke:0.18px currentColor;">Technology</div><div style="position:absolute;left:129.10px;top:500.90px;font:400 10.5px/11.729px 'Liberation Sans', sans-serif;color:#333333;white-space:pre;-webkit-text-stroke:0.18px currentColor;">Soccer</div><div style="position:absolute;left:209.80px;top:500.90px;font:400 10.5px/11.729px 'Liberation Sans', sans-serif;color:#333333;white-space:pre;-webkit-text-stroke:0.18px currentColor;">Oregon</div><div style="position:absolute;left:316.60px;top:500.90px;font:400 10.5px/11.729px 'Liberation Sans', sans-serif;color:#333333;white-space:pre;-webkit-text-stroke:0.18px currentColor;">Technology</div><div style="position:absolute;left:491.76px;top:500.90px;font:400 10.5px/11.729px 'Liberation Sans', sans-serif;color:#333333;white-space:pre;-webkit-text-stroke:0.18px currentColor;">3</div><div style="position:absolute;left:502.90px;top:500.90px;font:400 10.5px/11.729px 'Liberation Sans', sans-serif;color:#333333;white-space:pre;-webkit-text-stroke:0.18px currentColor;">Grouped with others interested in Soccer and Technology</div><div style="position:absolute;left:23.50px;top:516.37px;font:400 10.5px/11.729px 'Liberation Sans', sans-serif;color:#333333;white-space:pre;-webkit-text-stroke:0.18px currentColor;">Retail/E-commerce</div><div style="position:absolute;left:129.10px;top:516.37px;font:400 10.5px/11.729px 'Liberation Sans', sans-serif;color:#333333;white-space:pre;-webkit-text-stroke:0.18px currentColor;">Auto Racing</div><div style="position:absolute;left:209.80px;top:516.37px;font:400 10.5px/11.729px 'Liberation Sans', sans-serif;color:#333333;white-space:pre;-webkit-text-stroke:0.18px currentColor;">Indiana</div><div style="position:absolute;left:316.60px;top:516.37px;font:400 10.5px/11.729px 'Liberation Sans', sans-serif;color:#333333;white-space:pre;-webkit-text-stroke:0.18px currentColor;">Retail/E-commerce</div><div style="position:absolute;left:491.76px;top:516.37px;font:400 10.5px/11.729px 'Liberation Sans', sans-serif;color:#333333;white-space:pre;-webkit-text-stroke:0.18px currentColor;">4</div><div style="position:absolute;left:502.90px;top:516.37px;font:400 10.5px/11.729px 'Liberation Sans', sans-serif;color:#333333;white-space:pre;-webkit-text-stroke:0.18px currentColor;">Grouped with others interested in Retail/E-commerce</div><div style="position:absolute;left:7.68px;top:190.30px;font:400 10.5px/11.729px 'Liberation Sans', sans-serif;color:#3c3c3c;white-space:pre;-webkit-text-stroke:0.18px currentColor;">1</div><div style="position:absolute;left:7.68px;top:206.97px;font:400 10.5px/11.729px 'Liberation Sans', sans-serif;color:#3c3c3c;white-space:pre;-webkit-text-stroke:0.18px currentColor;">2</div><div style="position:absolute;left:7.68px;top:222.44px;font:400 10.5px/11.729px 'Liberation Sans', sans-serif;color:#5a5a5a;white-space:pre;-webkit-text-stroke:0.18px currentColor;">3</div><div style="position:absolute;left:7.68px;top:237.91px;font:400 10.5px/11.729px 'Liberation Sans', sans-serif;color:#3c3c3c;white-space:pre;-webkit-text-stroke:0.18px currentColor;">4</div><div style="position:absolute;left:7.68px;top:253.38px;font:400 10.5px/11.729px 'Liberation Sans', sans-serif;color:#3c3c3c;white-space:pre;-webkit-text-stroke:0.18px currentColor;">5</div><div style="position:absolute;left:7.68px;top:268.85px;font:400 10.5px/11.729px 'Liberation Sans', sans-serif;color:#3c3c3c;white-space:pre;-webkit-text-stroke:0.18px currentColor;">6</div><div style="position:absolute;left:7.68px;top:284.32px;font:400 10.5px/11.729px 'Liberation Sans', sans-serif;color:#3c3c3c;white-space:pre;-webkit-text-stroke:0.18px currentColor;">7</div><div style="position:absolute;left:7.68px;top:299.79px;font:400 10.5px/11.729px 'Liberation Sans', sans-serif;color:#3c3c3c;white-space:pre;-webkit-text-stroke:0.18px currentColor;">8</div><div style="position:absolute;left:7.68px;top:315.26px;font:400 10.5px/11.729px 'Liberation Sans', sans-serif;color:#3c3c3c;white-space:pre;-webkit-text-stroke:0.18px currentColor;">9</div><div style="position:absolute;left:4.76px;top:330.73px;font:400 10.5px/11.729px 'Liberation Sans', sans-serif;color:#3c3c3c;white-space:pre;-webkit-text-stroke:0.18px currentColor;">10</div><div style="position:absolute;left:5.15px;top:346.20px;font:400 10.5px/11.729px 'Liberation Sans', sans-serif;color:#3c3c3c;white-space:pre;-webkit-text-stroke:0.18px currentColor;">11</div><div style="position:absolute;left:4.76px;top:361.67px;font:400 10.5px/11.729px 'Liberation Sans', sans-serif;color:#3c3c3c;white-space:pre;-webkit-text-stroke:0.18px currentColor;">12</div><div style="position:absolute;left:4.76px;top:377.14px;font:400 10.5px/11.729px 'Liberation Sans', sans-serif;color:#3c3c3c;white-space:pre;-webkit-text-stroke:0.18px currentColor;">13</div><div style="position:absolute;left:4.76px;top:392.61px;font:400 10.5px/11.729px 'Liberation Sans', sans-serif;color:#3c3c3c;white-space:pre;-webkit-text-stroke:0.18px currentColor;">14</div><div style="position:absolute;left:4.76px;top:408.08px;font:400 10.5px/11.729px 'Liberation Sans', sans-serif;color:#3c3c3c;white-space:pre;-webkit-text-stroke:0.18px currentColor;">15</div><div style="position:absolute;left:4.76px;top:423.55px;font:400 10.5px/11.729px 'Liberation Sans', sans-serif;color:#3c3c3c;white-space:pre;-webkit-text-stroke:0.18px currentColor;">16</div><div style="position:absolute;left:4.76px;top:439.02px;font:400 10.5px/11.729px 'Liberation Sans', sans-serif;color:#3c3c3c;white-space:pre;-webkit-text-stroke:0.18px currentColor;">17</div><div style="position:absolute;left:4.76px;top:454.49px;font:400 10.5px/11.729px 'Liberation Sans', sans-serif;color:#3c3c3c;white-space:pre;-webkit-text-stroke:0.18px currentColor;">18</div><div style="position:absolute;left:4.76px;top:469.96px;font:400 10.5px/11.729px 'Liberation Sans', sans-serif;color:#3c3c3c;white-space:pre;-webkit-text-stroke:0.18px currentColor;">19</div><div style="position:absolute;left:4.76px;top:485.43px;font:400 10.5px/11.729px 'Liberation Sans', sans-serif;color:#3c3c3c;white-space:pre;-webkit-text-stroke:0.18px currentColor;">20</div><div style="position:absolute;left:4.76px;top:500.90px;font:400 10.5px/11.729px 'Liberation Sans', sans-serif;color:#3c3c3c;white-space:pre;-webkit-text-stroke:0.18px currentColor;">21</div><div style="position:absolute;left:4.76px;top:516.37px;font:400 10.5px/11.729px 'Liberation Sans', sans-serif;color:#3c3c3c;white-space:pre;-webkit-text-stroke:0.18px currentColor;">22</div><div style="position:absolute;left:70.36px;top:158.65px;font:400 10px/11.170px 'Liberation Sans', sans-serif;color:#222;white-space:pre;">E</div><div style="position:absolute;left:163.90px;top:158.65px;font:400 10px/11.170px 'Liberation Sans', sans-serif;color:#3a6e55;white-space:pre;">F</div><div style="position:absolute;left:257.16px;top:158.65px;font:400 10px/11.170px 'Liberation Sans', sans-serif;color:#222;white-space:pre;">G</div><div style="position:absolute;left:363.38px;top:158.65px;font:400 10px/11.170px 'Liberation Sans', sans-serif;color:#222;white-space:pre;">H</div><div style="position:absolute;left:458.61px;top:158.65px;font:400 10px/11.170px 'Liberation Sans', sans-serif;color:#222;white-space:pre;">I</div><div style="position:absolute;left:692.50px;top:158.65px;font:400 10px/11.170px 'Liberation Sans', sans-serif;color:#222;white-space:pre;">J</div><div style="position:absolute;left:911.66px;top:158.65px;font:400 10px/11.170px 'Liberation Sans', sans-serif;color:#222;white-space:pre;">K</div><div style="position:absolute;left:963.22px;top:158.65px;font:400 10px/11.170px 'Liberation Sans', sans-serif;color:#222;white-space:pre;">L</div><div style="position:absolute;left:38.20px;top:14.27px;font:400 9.2px/10.276px 'Liberation Sans', sans-serif;color:#d9f0e0;white-space:pre;transform:scaleX(0.8684);transform-origin:0 0;">AutoSave</div><div style="position:absolute;left:96.80px;top:14.47px;font:400 9.2px/10.276px 'Liberation Sans', sans-serif;color:#d9f0e0;white-space:pre;transform:scaleX(0.9013);transform-origin:0 0;">Off</div><div style="position:absolute;left:479.30px;top:14.07px;font:400 10.2px/11.393px 'Liberation Sans', sans-serif;color:#e6f2ea;white-space:pre;transform:scaleX(0.8700);transform-origin:0 0;">COPILOT Function Examples.xlsx</div><div style="position:absolute;left:16.00px;top:45.88px;font:400 10.3px/11.505px 'Liberation Sans', sans-serif;color:#3d3d3d;white-space:pre;">File</div><div style="position:absolute;left:53.60px;top:45.88px;font:400 10.3px/11.505px 'Liberation Sans', sans-serif;color:#3d3d3d;white-space:pre;transform:scaleX(1.0667);transform-origin:0 0;">Home</div><div style="position:absolute;left:99.00px;top:45.88px;font:400 10.3px/11.505px 'Liberation Sans', sans-serif;color:#3d3d3d;white-space:pre;transform:scaleX(1.0246);transform-origin:0 0;">Insert</div><div style="position:absolute;left:141.70px;top:45.88px;font:400 10.3px/11.505px 'Liberation Sans', sans-serif;color:#3d3d3d;white-space:pre;transform:scaleX(1.0278);transform-origin:0 0;">Draw</div><div style="position:absolute;left:182.00px;top:45.88px;font:400 10.3px/11.505px 'Liberation Sans', sans-serif;color:#3d3d3d;white-space:pre;transform:scaleX(0.9891);transform-origin:0 0;">Page Layout</div><div style="position:absolute;left:256.00px;top:45.88px;font:400 10.3px/11.505px 'Liberation Sans', sans-serif;color:#3d3d3d;white-space:pre;">Formulas</div><div style="position:absolute;left:313.90px;top:45.88px;font:400 10.3px/11.505px 'Liberation Sans', sans-serif;color:#3d3d3d;white-space:pre;transform:scaleX(1.0200);transform-origin:0 0;">Data</div><div style="position:absolute;left:351.70px;top:45.88px;font:400 10.3px/11.505px 'Liberation Sans', sans-serif;color:#3d3d3d;white-space:pre;transform:scaleX(0.9684);transform-origin:0 0;">Review</div><div style="position:absolute;left:400.00px;top:45.88px;font:400 10.3px/11.505px 'Liberation Sans', sans-serif;color:#3d3d3d;white-space:pre;transform:scaleX(1.0388);transform-origin:0 0;">View</div><div style="position:absolute;left:438.40px;top:45.88px;font:400 10.3px/11.505px 'Liberation Sans', sans-serif;color:#3d3d3d;white-space:pre;transform:scaleX(1.0754);transform-origin:0 0;">Automate</div><div style="position:absolute;left:501.60px;top:45.88px;font:400 10.3px/11.505px 'Liberation Sans', sans-serif;color:#3d3d3d;white-space:pre;transform:scaleX(1.0248);transform-origin:0 0;">Developer</div><div style="position:absolute;left:565.60px;top:45.88px;font:400 10.3px/11.505px 'Liberation Sans', sans-serif;color:#3d3d3d;white-space:pre;transform:scaleX(1.0369);transform-origin:0 0;">My Macros</div><div style="position:absolute;left:633.00px;top:45.88px;font:400 10.3px/11.505px 'Liberation Sans', sans-serif;color:#3d3d3d;white-space:pre;transform:scaleX(1.0572);transform-origin:0 0;">Help</div><div style="position:absolute;left:672.00px;top:45.88px;font:400 10.3px/11.505px 'Liberation Sans', sans-serif;color:#3d3d3d;white-space:pre;transform:scaleX(1.0136);transform-origin:0 0;">Power Pivot</div><div style="position:absolute;left:827.60px;top:45.79px;font:400 10.4px/11.617px 'Liberation Sans', sans-serif;color:#333;white-space:pre;transform:scaleX(1.0272);transform-origin:0 0;">Comments</div><div style="position:absolute;left:905.60px;top:45.61px;font:400 10.6px/11.840px 'Liberation Sans', sans-serif;color:#ffffff;white-space:pre;transform:scaleX(0.9193);transform-origin:0 0;">Share</div><div style="position:absolute;left:968.40px;top:45.79px;font:400 10.4px/11.617px 'Liberation Sans', sans-serif;color:#c9ccd0;white-space:pre;transform:scaleX(0.9713);transform-origin:0 0;">Catch up</div><div style="position:absolute;left:11.00px;top:73.19px;font:400 10.4px/11.617px 'Liberation Sans', sans-serif;color:#333;white-space:pre;transform:scaleX(0.9390);transform-origin:0 0;">F3</div><div style="position:absolute;left:146.40px;top:69.36px;font:italic 700 13.5px/15.293px 'Liberation Serif', serif;color:#333;white-space:pre;transform:scaleX(1.1022);transform-origin:0 0;">fx</div><div style="position:absolute;left:184.20px;top:73.53px;font:400 10.65px/12.064px 'Liberation Mono', monospace;color:#2e2e2e;white-space:pre;">=COPILOT(&quot;The following data is survey responses from people that are attending an event. The event will have five tables that</div><div style="position:absolute;left:184.20px;top:88.83px;font:400 10.65px/12.064px 'Liberation Mono', monospace;color:#2e2e2e;white-space:pre;">sit six people each. Please assign a table number to each person based on their common interests with other people sitting at</div><div style="position:absolute;left:184.20px;top:104.13px;font:400 10.65px/12.064px 'Liberation Mono', monospace;color:#2e2e2e;white-space:pre;">the table. Include a column that explains the reasoning for the table assignment.&quot;, C3:E33)</div><div style="position:absolute;left:8.14px;top:128.70px;font:400 7.4px/8.266px 'Liberation Sans', sans-serif;color:#555;white-space:pre;">1</div><div style="position:absolute;left:7.94px;top:143.50px;font:400 7.4px/8.266px 'Liberation Sans', sans-serif;color:#555;white-space:pre;">2</div><div style="position:absolute;left:96.60px;top:539.44px;font:400 11px/12.287px 'Liberation Sans', sans-serif;color:#3c3c3c;white-space:pre;transform:scaleX(0.9964);transform-origin:0 0;">Sentiment Analysis</div><div style="position:absolute;left:211.20px;top:537.25px;font:700 11px/12.287px 'Liberation Sans', sans-serif;color:#2a2a2a;white-space:pre;transform:scaleX(0.9478);transform-origin:0 0;">Seating Planner</div><div style="position:absolute;left:311.40px;top:539.44px;font:400 11px/12.287px 'Liberation Sans', sans-serif;color:#3c3c3c;white-space:pre;transform:scaleX(0.9923);transform-origin:0 0;">Standardize Dates</div><div style="position:absolute;left:422.60px;top:539.44px;font:400 11px/12.287px 'Liberation Sans', sans-serif;color:#3c3c3c;white-space:pre;transform:scaleX(0.9909);transform-origin:0 0;">Name Typos</div><div style="position:absolute;left:505.80px;top:539.44px;font:400 11px/12.287px 'Liberation Sans', sans-serif;color:#3c3c3c;white-space:pre;transform:scaleX(0.9952);transform-origin:0 0;">Complex</div><div style="position:absolute;left:9.60px;top:562.27px;font:400 9.2px/10.276px 'Liberation Sans', sans-serif;color:#555;white-space:pre;transform:scaleX(0.8207);transform-origin:0 0;">Ready</div><div style="position:absolute;left:44.80px;top:562.27px;font:400 9.2px/10.276px 'Liberation Sans', sans-serif;color:#555;white-space:pre;transform:scaleX(0.8780);transform-origin:0 0;">Sheet 9 of 20</div><div style="position:absolute;left:153.20px;top:562.27px;font:700 9.2px/10.276px 'Liberation Sans', sans-serif;color:#333;white-space:pre;transform:scaleX(0.9053);transform-origin:0 0;">Accessibility: Investigate</div><div style="position:absolute;left:712.60px;top:562.27px;font:400 9.2px/10.276px 'Liberation Sans', sans-serif;color:#555;white-space:pre;transform:scaleX(0.8865);transform-origin:0 0;">Display Settings</div><div style="position:absolute;left:997.20px;top:562.27px;font:400 9.2px/10.276px 'Liberation Sans', sans-serif;color:#555;white-space:pre;transform:scaleX(0.8596);transform-origin:0 0;">100%</div><div style="position:absolute;left:207.80px;top:219.60px;width:138.60px;height:33.60px;background:#fff;border:0.8px solid #d6d6d6;border-radius:4px;box-shadow:0 1.5px 4px rgba(0,0,0,0.14);box-sizing:border-box"></div><svg style="position:absolute;left:288px;top:226px" width="50" height="22" fill="none" stroke="#555" stroke-width="0.9" stroke-linejoin="round">
<path d="M6.4 10.2c0-.6.4-1 1-1h1.2l2.6-4c.5-.7 1.6-.5 1.7.4l.1 1.2l-.5 2.4h3c.9 0 1.5.8 1.3 1.6l-1 4.2c-.2.7-.8 1.1-1.5 1.1h-5.2c-1.6 0-2.7-1.4-2.7-2.8z"/>
<path d="M43.4 11.2c0 .6-.4 1-1 1h-1.2l-2.6 4c-.5.7-1.6.5-1.7-.4l-.1-1.2l.5-2.4h-3c-.9 0-1.5-.8-1.3-1.6l1-4.2c.2-.7.8-1.1 1.5-1.1h5.2c1.6 0 2.7 1.4 2.7 2.8z"/>
</svg><div style="position:absolute;left:205.60px;top:232.24px;width:3.00px;height:3.00px;background:#2a6a50"></div><svg style="position:absolute;left:238px;top:175px" width="20" height="20">
<path d="M6.4 1.6h5.2v4.6h4.6v5.2h-4.6v4.6h-5.2v-4.6h-4.6v-5.2h4.6z" fill="#fff" stroke="#111" stroke-width="1.5" stroke-linejoin="round"/>
</svg><div style="position:absolute;left:220.00px;top:232.11px;font:400 9.6px/10.723px 'Liberation Sans', sans-serif;color:#383838;white-space:pre;transform:scaleX(0.9807);transform-origin:0 0;">AI-generated</div>

</body></html>
